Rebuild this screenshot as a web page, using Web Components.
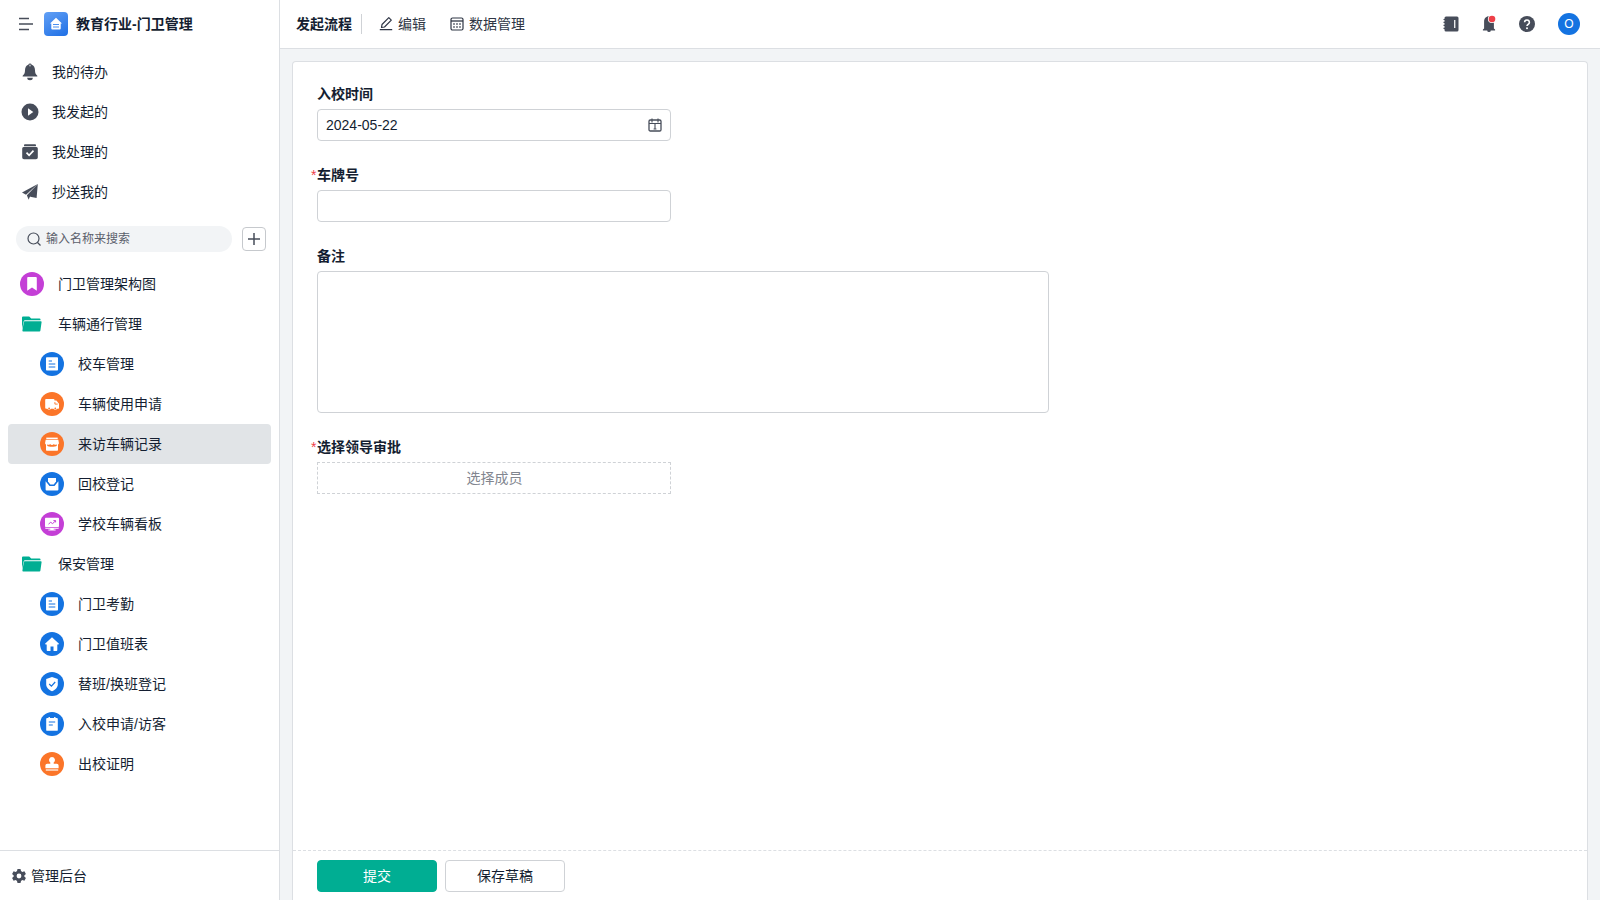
<!DOCTYPE html>
<html lang="zh-CN">
<head>
<meta charset="utf-8">
<meta name="viewport" content="width=device-width, initial-scale=1">
<title>教育行业-门卫管理</title>
<style>
  :root {
    --text: #141e31;
    --icon: #474d5a;
    --line: #dcdfe3;
    --field-line: #cfd2d6;
    --green: #00ae93;
    --blue: #1473e1;
    --orange: #fb7529;
    --purple: #c43fd6;
  }

  body {
    margin: 0;
    font: 14px/20px "Liberation Sans", "Noto Sans CJK SC", sans-serif;
    color: var(--text);
    background: #f2f4f6;
  }
</style>
</head>
<body>
<app-shell>
  <side-bar slot="side" heading="教育行业-门卫管理">
    <nav-item slot="nav" icon="bell">我的待办</nav-item>
    <nav-item slot="nav" icon="play">我发起的</nav-item>
    <nav-item slot="nav" icon="done">我处理的</nav-item>
    <nav-item slot="nav" icon="send">抄送我的</nav-item>

    <tree-item icon="bookmark" color="purple">门卫管理架构图</tree-item>
    <tree-item icon="folder">车辆通行管理</tree-item>
    <tree-item child icon="doc" color="blue">校车管理</tree-item>
    <tree-item child icon="truck" color="orange">车辆使用申请</tree-item>
    <tree-item child active icon="shop" color="orange">来访车辆记录</tree-item>
    <tree-item child icon="mail" color="blue">回校登记</tree-item>
    <tree-item child icon="board" color="purple">学校车辆看板</tree-item>
    <tree-item icon="folder">保安管理</tree-item>
    <tree-item child icon="doc" color="blue">门卫考勤</tree-item>
    <tree-item child icon="home" color="blue">门卫值班表</tree-item>
    <tree-item child icon="shield" color="blue">替班/换班登记</tree-item>
    <tree-item child icon="note" color="blue">入校申请/访客</tree-item>
    <tree-item child icon="stamp" color="orange">出校证明</tree-item>
  </side-bar>

  <top-bar slot="top" heading="发起流程" user="O">
    <top-action icon="edit">编辑</top-action>
    <top-action icon="table">数据管理</top-action>
  </top-bar>

  <form-card>
    <form-field type="date" label="入校时间" value="2024-05-22"></form-field>
    <form-field type="text" label="车牌号" required></form-field>
    <form-field type="textarea" label="备注"></form-field>
    <form-field type="member" label="选择领导审批" required value="选择成员"></form-field>
    <form-button slot="actions" primary>提交</form-button>
    <form-button slot="actions">保存草稿</form-button>
  </form-card>
</app-shell>

<script>
const ICONS = {
  menu: [16, '<path d="M1 2.500h10M1 8h14M1 13.500h10" fill="none" stroke="currentColor" stroke-width="1.600"/>'],
  logo: [24, '<path d="M12 5.800 18 11.400h-1.300v5.200a1 1 0 0 1-1 1H8.300a1 1 0 0 1-1-1v-5.200H6z" fill="#fff"/><path d="M9 12.500h6M9 15h6" stroke="#4b8ff0" stroke-width="1.100"/>'],
  bell: [18, '<path d="M9 .5a2 2 0 0 1 1.700 1.200c2.200.9 3.300 2.900 3.300 5.500 0 2.500.7 4.200 2.100 5.300.6.5.3 1.100-.3 1.100H2.200c-.6 0-.9-.6-.3-1.100C3.300 11.400 4 9.700 4 7.200c0-2.600 1.100-4.600 3.300-5.500A2 2 0 0 1 9 .5z"/><path d="M6.200 14.800h5.600a2.800 2.500 0 0 1-5.600 0z"/><circle cx="9" cy="2.500" r=".9" fill="#b4b7bd"/>'],
  play: [18, '<circle cx="9" cy="9" r="8.500"/><path d="M7 5.200v7.600L12.300 9z" fill="#fff"/>'],
  done: [18, '<rect x="3" y="1.300" width="12" height="2" rx=".9"/><path d="M2.600 4h12.800a1.600 1.600 0 0 1 1.400 1.600v8.800a1.800 1.800 0 0 1-1.800 1.800H3a1.800 1.800 0 0 1-1.800-1.800V5.600A1.600 1.600 0 0 1 2.600 4z"/><path d="m5.500 9.700 2.600 2.600 4.400-4.600" fill="none" stroke="#fff" stroke-width="1.700"/>'],
  send: [18, '<path d="M16.800 1 1 9.500l4 2.200z"/><path d="M16.800 1 5.900 12.200l1.700 4.600 1.600-3 6.400 1.200z"/><path d="m9.300 13.700-1.600 3" stroke="#fff" stroke-width=".5"/>'],
  search: [16, '<circle cx="7.500" cy="7.500" r="5.500" fill="none" stroke="currentColor" stroke-width="1.200"/><path d="m11.500 11.500 3 3" stroke="currentColor" stroke-width="1.200"/>'],
  plus: [16, '<path d="M8 2v12M2 8h12" stroke="currentColor" stroke-width="1.500"/>'],
  gear: [16, '<path fill-rule="evenodd" d="M6.500 1h3l.5 2.100 1.300.8 2.100-.7 1.500 2.700-1.600 1.500v1.200l1.600 1.500-1.500 2.700-2.100-.7-1.300.8-.5 2.100h-3L6 12.900l-1.300-.8-2.100.7-1.500-2.700 1.600-1.500V7.400L1.100 5.900l1.500-2.700 2.100.7L6 3.100zM8 5.600a2.400 2.400 0 1 0 0 4.800 2.400 2.400 0 0 0 0-4.800z"/>'],
  edit: [16, '<path d="M1.800 13.600h12.400M3.500 11.500l.5-3 6.800-6.800 2.500 2.500-6.800 6.800z" fill="none" stroke="currentColor" stroke-width="1.200" stroke-linejoin="round"/>'],
  table: [16, '<rect x="2" y="2" width="12" height="12" rx="1.500" fill="none" stroke="currentColor" stroke-width="1.200"/><path d="M2 5h12" stroke="currentColor" stroke-width="1.300"/><path d="M4.300 8h1.400M7.300 8h1.400M10.300 8h1.400M4.300 11h1.400M7.300 11h1.400M10.300 11h1.400" stroke="currentColor" stroke-width="1.400"/>'],
  calendar: [16, '<path d="M2 6.500h12M5 1.500v4M11 1.500v4M8 6.500v6M6.600 12h2.800" fill="none" stroke="currentColor" stroke-width="1.100"/><rect x="2" y="3" width="12" height="11" rx="1.300" fill="none" stroke="currentColor" stroke-width="1.300"/>'],
  book: [18, '<path d="M4 1.600h11A1.500 1.500 0 0 1 16.500 3.100v12a1.500 1.500 0 0 1-1.500 1.500H4a1.500 1.500 0 0 1-1.500-1.500V14h-1v-1.200h1v-1.700h-1V9.800h1V8.100h-1V6.800h1V5.100h-1V3.900h1v-.8A1.500 1.500 0 0 1 4 1.600z"/><path d="M12.700 5v8" stroke="#e9eaec" stroke-width="1.400"/>'],
  notice: [18, '<path d="M9 1.200c3.200 0 4.900 2.300 4.900 5.400v6.900l1.200 1.100v.8h-4.300a1.800 1.500 0 0 1-3.600 0H2.900v-.8l1.200-1.100V6.600C4.100 3.500 5.800 1.200 9 1.200z"/><circle cx="12" cy="4" r="4.100" fill="#fff"/><circle cx="12" cy="4" r="3.300" fill="#ee4048"/>'],
  help: [18, '<circle cx="9" cy="9" r="8"/><path d="M6.600 7.300a2.400 2.300 0 1 1 3.700 1.900c-.8.5-1.300.9-1.300 1.900" fill="none" stroke="#fff" stroke-width="1.600"/><circle cx="9" cy="13.200" r="1" fill="#fff"/>'],
  folder: [24, '<path d="M2 5.500a1 1 0 0 1 1-1h6.200l2 2h8.300a1 1 0 0 1 1 1v.8H4.500l-1 1.500L2 17z"/><path d="M4.800 9.200h16a.8.800 0 0 1 .8.900l-1.200 8.500a1 1 0 0 1-1 .9H3.200a.8.800 0 0 1-.8-.9l1.400-8.500a1 1 0 0 1 1-.9z"/>'],
  bookmark: [24, '<path d="M7.200 6a.9.900 0 0 1 .9-.9h7.800a.9.900 0 0 1 .9.900v12.800L12 15.500l-4.800 3.300z"/>'],
  doc: [24, '<rect x="6" y="5.200" width="12" height="13.400" rx=".8"/><path d="M8.700 9h3.300M8.700 12h6.600M8.700 15h6.600" stroke="var(--back)" stroke-width="1.100"/>'],
  truck: [24, '<path d="M6.100 7h7.400a1 1 0 0 1 1 1v.6h1.900l2.600 3.100v4.300a.7.700 0 0 1-.7.700h-1.200a2 2 0 0 1-3.600 0h-2.600a2 2 0 0 1-3.600 0H6.100a.9.900 0 0 1-.9-.9V8a.9.900 0 0 1 .9-1z"/><path d="M14.900 10.100v2h2.800" fill="none" stroke="var(--back)" stroke-width=".9"/><circle cx="9.100" cy="16.400" r=".9" fill="var(--back)"/><circle cx="15.300" cy="16.400" r=".9" fill="var(--back)"/>'],
  shop: [24, '<rect x="6.300" y="5.600" width="11.400" height="1.500"/><path d="M5.700 7.700h12.600l.6 3.200a1.900 1.900 0 0 1-.9 1.700v5.400a.8.800 0 0 1-.8.800H6.800a.8.800 0 0 1-.8-.8v-5.400a1.900 1.900 0 0 1-.9-1.700z"/><path d="M7.200 12.200c1 1 2.200.8 2.900-.3.900 1.300 2.900 1.300 3.800 0 .7 1.100 1.900 1.300 2.900.3v1.500c-1 1-7.800 1.600-9.600 0z" fill="var(--back)"/>'],
  mail: [24, '<path d="M8 6h8v3.600l-2.300 2.900h-3.400L8 9.600z"/><path d="M5.600 9.300 9.500 14h5l3.900-4.700v8.200a1 1 0 0 1-1 1H6.600a1 1 0 0 1-1-1z"/>'],
  board: [24, '<rect x="5" y="5.800" width="14" height="9.200" rx=".8"/><path d="M5 15.700h14a1 1 0 0 1-1 1h-4.300v.8h1.900v1H8.400v-1h1.900v-.8H6a1 1 0 0 1-1-1z"/><path d="m8.500 12.100 2.200-1.800 1.900 1.300 2.800-2.600M13.400 8.600h2.200v1.800" fill="none" stroke="var(--back)" stroke-width="1"/>'],
  home: [24, '<path d="m12 5.300 7 6.400-.6.900h-1.100v5.600a.8.800 0 0 1-.8.800h-3v-4.500h-3V19h-3a.8.800 0 0 1-.8-.8v-5.600H5.600l-.6-.9z"/>'],
  shield: [24, '<path d="m12 5 5.800 2v5.200c0 3.300-2.500 5.700-5.800 7-3.300-1.300-5.800-3.700-5.800-7V7z"/><path d="m9.200 12 2.200 2.200 3.800-4.200" fill="none" stroke="var(--back)" stroke-width="1.200"/>'],
  note: [24, '<path d="M6.200 7a.9.900 0 0 1 .9-.9h1.400V5h1.400v1.100h4.200V5h1.400v1.100h1.400a.9.900 0 0 1 .9.900v10.900a.9.900 0 0 1-.9.900H7.100a.9.900 0 0 1-.9-.9z"/><path d="M8.800 10h6.400M8.800 13h4" stroke="var(--back)" stroke-width="1.100"/>'],
  stamp: [24, '<path d="M12 5a3 3 0 0 1 1.700 5.400v1.300h3.100a1.800 1.800 0 0 1 1.800 1.800v2.700H5.400v-2.700a1.800 1.800 0 0 1 1.800-1.800h3.100v-1.300A3 3 0 0 1 12 5z"/><path d="M5.800 18h12.400" stroke="currentColor" stroke-width="1.200"/>']
};

class BaseElement extends HTMLElement {
  constructor() {
    super();
    this.attachShadow({ mode: "open" });
  }

  connectedCallback() {
    this.shadowRoot.innerHTML = `<style>*{box-sizing:border-box}${this.constructor.styles}</style>${this.template()}`;
  }

  attr(name) {
    return this.getAttribute(name) || "";
  }
}

class AppIcon extends BaseElement {
  static get styles() {
    return /* css */`
      :host{ display: block; flex: none; width: var(--size, 18px); height: var(--size, 18px); }
      svg{ display: block; width: 100%; height: 100%; fill: currentColor; }
    `;
  }

  template() {
    const [box, shape] = ICONS[this.attr("name")];
    return /* html */`<svg viewBox="0 0 ${box} ${box}" aria-hidden="true">${shape}</svg>`;
  }
}

class AppShell extends BaseElement {
  static get styles() {
    return /* css */`
      :host{
        display: grid;
        grid-template: auto 1fr / 280px 1fr;
        height: 100vh;
        min-height: 640px;
      }
      ::slotted([slot=side]){ grid-row: 1 / 3; }
    `;
  }

  template() {
    return /* html */`<slot name="side"></slot><slot name="top"></slot><slot></slot>`;
  }
}

class SideBar extends BaseElement {
  static get styles() {
    return /* css */`
      :host{
        display: flex;
        flex-direction: column;
        background: #fff;
        border-right: 1px solid var(--line);
        min-height: 0;
      }
      header{ display: flex; align-items: center; height: 48px; padding-left: 18px; margin-bottom: 4px; }
      button{ padding: 0; border: 0; background: none; color: var(--icon); cursor: pointer; }
      .menu{ --size: 16px; margin-right: 10px; }
      .logo{
        --size: 24px;
        border-radius: 4px;
        background: linear-gradient(150deg, #62a0f5, #1f6fe5);
        margin-right: 8px;
      }
      h1{ margin: 0; font-size: 14px; font-weight: bold; }
      .search{ display: flex; align-items: center; gap: 10px; padding: 14px 13px 12px 16px; }
      label{
        display: flex;
        align-items: center;
        gap: 4px;
        flex: 1;
        height: 26px;
        padding: 0 10px;
        border-radius: 13px;
        background: #f2f4f6;
        color: var(--icon);
        --size: 16px;
      }
      input{
        flex: 1;
        min-width: 0;
        padding: 0;
        border: 0;
        outline: 0;
        background: none;
        font: inherit;
        font-size: 12px;
      }
      input::placeholder{ color: #5b606b; opacity: 1; }
      .add{
        --size: 16px;
        display: grid;
        place-items: center;
        width: 24px;
        height: 24px;
        border: 1px solid #c6c9cd;
        border-radius: 4px;
      }
      .tree{ flex: 1; min-height: 0; overflow: hidden; padding: 0 8px; }
      footer{ border-top: 1px solid var(--line); }
      footer a{
        --size: 16px;
        display: flex;
        align-items: center;
        gap: 4px;
        height: 49px;
        padding: 0 11px;
        color: inherit;
        text-decoration: none;
      }
      footer app-icon{ color: var(--icon); }
    `;
  }

  template() {
    return /* html */`
      <header>
        <button class="menu" aria-label="菜单"><app-icon name="menu"></app-icon></button>
        <app-icon class="logo" name="logo"></app-icon>
        <h1>${this.attr("heading")}</h1>
      </header>
      <nav><slot name="nav"></slot></nav>
      <div class="search">
        <label><app-icon name="search"></app-icon><input type="text" aria-label="搜索" placeholder="输入名称来搜索"></label>
        <button class="add" aria-label="新建"><app-icon name="plus"></app-icon></button>
      </div>
      <nav class="tree"><slot></slot></nav>
      <footer><a href="#admin"><app-icon name="gear"></app-icon>管理后台</a></footer>
    `;
  }
}

class NavItem extends BaseElement {
  static get styles() {
    return /* css */`
      :host{ display: block; }
      a{
        display: flex;
        align-items: center;
        gap: 13px;
        height: 40px;
        padding-left: 21px;
        color: inherit;
        text-decoration: none;
      }
      app-icon{ color: var(--icon); }
    `;
  }

  template() {
    return /* html */`<a href="#${this.attr("icon")}"><app-icon name="${this.attr("icon")}"></app-icon><slot></slot></a>`;
  }
}

class TreeItem extends BaseElement {
  static get styles() {
    return /* css */`
      :host{ display: block; }
      a{
        --size: 24px;
        display: flex;
        align-items: center;
        gap: 14px;
        height: 40px;
        padding-left: 12px;
        border-radius: 4px;
        color: inherit;
        text-decoration: none;
      }
      :host([child]) a{ padding-left: 32px; }
      :host([active]) a{ background: #e1e4e7; }
      app-icon{ color: var(--green); }
      :host([color]) app-icon{ color: #fff; background: var(--back); border-radius: 50%; }
    `;
  }

  template() {
    return /* html */`
      <a href="#" style="--back: var(--${this.attr("color") || "green"})">
        <app-icon name="${this.attr("icon")}"></app-icon><slot></slot>
      </a>
    `;
  }
}

class TopBar extends BaseElement {
  static get styles() {
    return /* css */`
      :host{
        display: flex;
        align-items: center;
        height: 49px;
        box-sizing: border-box;
        padding: 0 20px 0 16px;
        background: #fff;
        border-bottom: 1px solid var(--line);
      }
      h2{ margin: 0; font-size: 14px; font-weight: bold; }
      hr{ width: 1px; height: 20px; margin: 0 16px 0 9px; border: 0; background: #cfd2d6; }
      .actions{ display: flex; gap: 23px; flex: 1; }
      .tools{ display: flex; align-items: center; gap: 20px; }
      button{ padding: 0; border: 0; background: none; color: var(--icon); cursor: pointer; }
      .user{
        width: 22px;
        height: 22px;
        margin-left: 2px;
        border-radius: 50%;
        background: var(--blue);
        color: #fff;
        font: inherit;
        font-size: 12px;
      }
    `;
  }

  template() {
    return /* html */`
      <h2>${this.attr("heading")}</h2>
      <hr>
      <div class="actions"><slot></slot></div>
      <div class="tools">
        <button aria-label="通讯录"><app-icon name="book"></app-icon></button>
        <button aria-label="消息"><app-icon name="notice"></app-icon></button>
        <button aria-label="帮助"><app-icon name="help"></app-icon></button>
        <button class="user">${this.attr("user")}</button>
      </div>
    `;
  }
}

class TopAction extends BaseElement {
  static get styles() {
    return /* css */`
      :host{ display: block; }
      button{
        --size: 16px;
        display: flex;
        align-items: center;
        gap: 4px;
        padding: 0;
        border: 0;
        background: none;
        font: inherit;
        color: #2f3645;
        cursor: pointer;
      }
    `;
  }

  template() {
    return /* html */`<button><app-icon name="${this.attr("icon")}"></app-icon><slot></slot></button>`;
  }
}

class FormCard extends BaseElement {
  static get styles() {
    return /* css */`
      :host{
        display: flex;
        flex-direction: column;
        min-height: 0;
        margin: 12px 12px 0;
        background: #fff;
        border: 1px solid var(--line);
        border-bottom: 0;
        border-radius: 4px 4px 0 0;
      }
      .fields{
        display: flex;
        flex-direction: column;
        gap: 24px;
        flex: 1;
        max-width: 774px;
        padding: 22px 18px;
      }
      footer{
        display: flex;
        gap: 8px;
        padding: 9px 24px 8px;
        border-top: 1px dashed var(--line);
      }
    `;
  }

  template() {
    return /* html */`
      <div class="fields"><slot></slot></div>
      <footer><slot name="actions"></slot></footer>
    `;
  }
}

class FormField extends BaseElement {
  static get styles() {
    return /* css */`
      :host{ display: grid; gap: 5px; }
      label{ display: flex; font-weight: bold; line-height: 20px; }
      label span{ width: 6px; color: #ee4048; font-weight: normal; }
      .control{
        --size: 16px;
        display: flex;
        align-items: center;
        width: calc(50% - 15px);
        height: 32px;
        margin-left: 6px;
        padding: 0 7px 0 8px;
        border: 1px solid var(--field-line);
        border-radius: 4px;
        background: #fff;
        color: inherit;
        font: inherit;
      }
      textarea.control{ width: auto; height: 142px; padding: 6px 8px; resize: none; }
      button.control{ justify-content: center; border-style: dashed; border-radius: 0; color: #82868f; }
      input{
        flex: 1;
        min-width: 0;
        padding: 0;
        border: 0;
        outline: 0;
        background: none;
        color: inherit;
        font: inherit;
      }
      app-icon{ color: var(--icon); }
    `;
  }

  control() {
    const value = this.attr("value");
    switch (this.attr("type")) {
      case "textarea":
        return `<textarea id="control" class="control">${value}</textarea>`;
      case "member":
        return `<button id="control" class="control" type="button">${value}</button>`;
      case "date":
        return `<div class="control"><input id="control" type="text" value="${value}"><app-icon name="calendar"></app-icon></div>`;
      default:
        return `<div class="control"><input id="control" type="text" value="${value}"></div>`;
    }
  }

  template() {
    const mark = this.hasAttribute("required") ? "*" : "";
    return /* html */`<label for="control"><span>${mark}</span>${this.attr("label")}</label>${this.control()}`;
  }
}

class FormButton extends BaseElement {
  static get styles() {
    return /* css */`
      :host{ display: block; }
      button{
        width: 120px;
        height: 32px;
        padding: 0;
        border: 1px solid var(--field-line);
        border-radius: 4px;
        background: #fff;
        color: inherit;
        font: inherit;
        cursor: pointer;
      }
      :host([primary]) button{ border-color: var(--green); background: var(--green); color: #fff; }
    `;
  }

  template() {
    return /* html */`<button type="button"><slot></slot></button>`;
  }
}

customElements.define("app-icon", AppIcon);
customElements.define("app-shell", AppShell);
customElements.define("side-bar", SideBar);
customElements.define("nav-item", NavItem);
customElements.define("tree-item", TreeItem);
customElements.define("top-bar", TopBar);
customElements.define("top-action", TopAction);
customElements.define("form-card", FormCard);
customElements.define("form-field", FormField);
customElements.define("form-button", FormButton);
</script>
</body>
</html>
